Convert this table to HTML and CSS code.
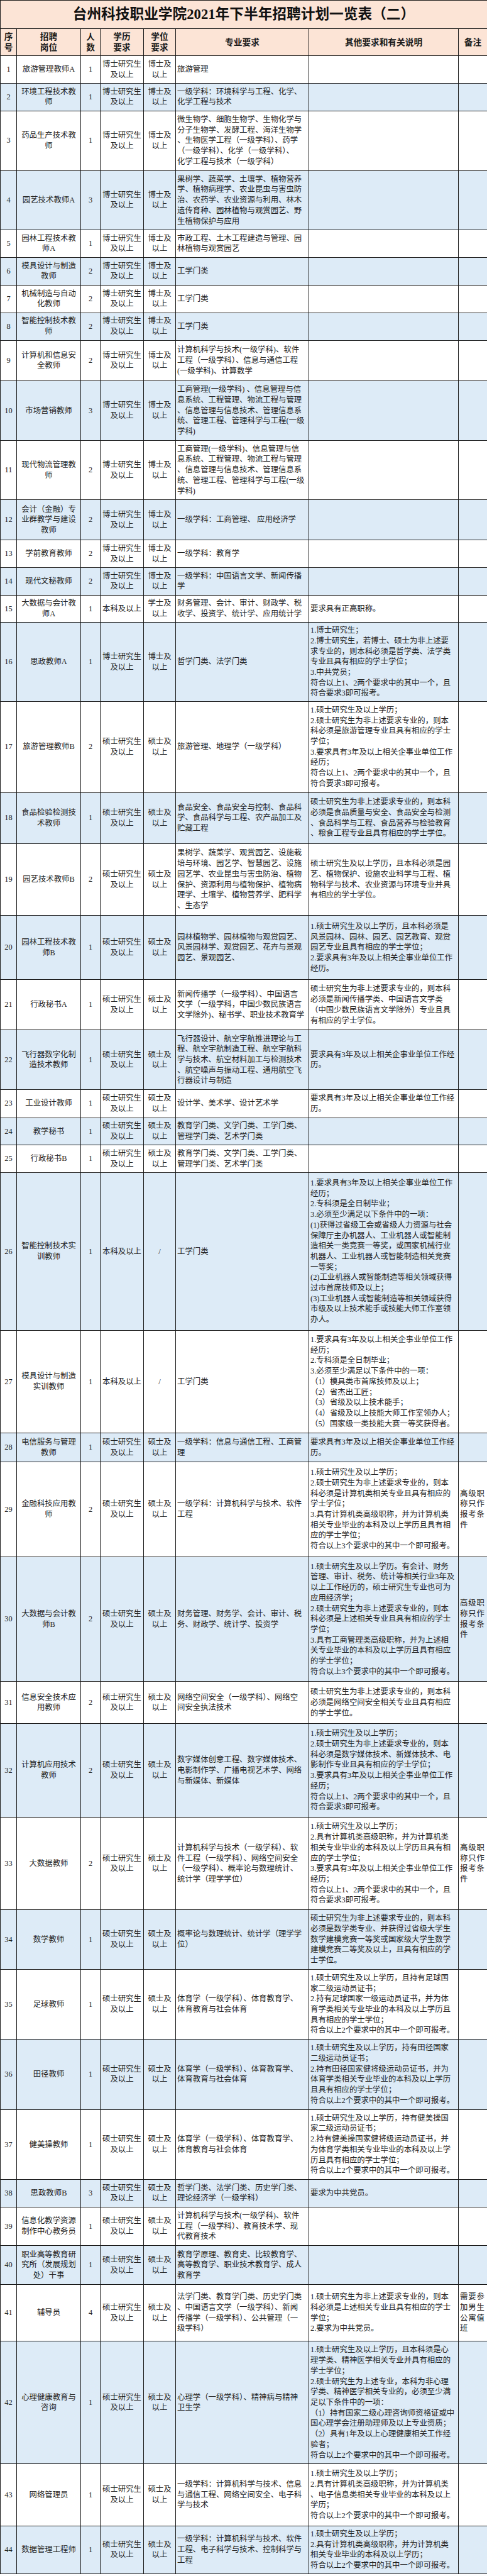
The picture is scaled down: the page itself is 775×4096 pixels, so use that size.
FILE: index.html
```html
<!DOCTYPE html>
<html lang="zh-CN">
<head>
<meta charset="utf-8">
<title>台州科技职业学院2021年下半年招聘计划一览表（二）</title>
<link rel="stylesheet" href="styles.css">
</head>
<body>
<table class="plan">
<colgroup>
<col class="w-seq"><col class="w-pos"><col class="w-num"><col class="w-edu"><col class="w-deg"><col class="w-major"><col class="w-other"><col class="w-note">
</colgroup>
<thead>
<tr class="title"><th colspan="8">台州科技职业学院2021年下半年招聘计划一览表（二）</th></tr>
<tr class="head">
<th>序<br>号</th><th>招聘<br>岗位</th><th>人<br>数</th><th>学历<br>要求</th><th>学位<br>要求</th><th>专业要求</th><th>其他要求和有关说明</th><th>备注</th>
</tr>
</thead>
<tbody>
<tr><td>1</td><td>旅游管理教师A</td><td>1</td><td>博士研究生<br>及以上</td><td>博士及<br>以上</td><td class="l">旅游管理</td><td class="l"></td><td class="l"></td></tr>
<tr><td>2</td><td>环境工程技术教<br>师</td><td>1</td><td>博士研究生<br>及以上</td><td>博士及<br>以上</td><td class="l">一级学科：环境科学与工程、化学、<br>化学工程与技术</td><td class="l"></td><td class="l"></td></tr>
<tr><td>3</td><td>药品生产技术教<br>师</td><td>1</td><td>博士研究生<br>及以上</td><td>博士及<br>以上</td><td class="l">微生物学、细胞生物学、生物化学与<br>分子生物学、发酵工程、海洋生物学<br>、生物医学工程（一级学科）、药学<br>（一级学科）、化学（一级学科）、<br>化学工程与技术（一级学科）</td><td class="l"></td><td class="l"></td></tr>
<tr><td>4</td><td>园艺技术教师A</td><td>3</td><td>博士研究生<br>及以上</td><td>博士及<br>以上</td><td class="l">果树学、蔬菜学、土壤学、植物营养<br>学、植物病理学、农业昆虫与害虫防<br>治、农药学、农业资源与利用、林木<br>遗传育种、园林植物与观赏园艺、野<br>生植物保护与应用</td><td class="l"></td><td class="l"></td></tr>
<tr><td>5</td><td>园林工程技术教<br>师A</td><td>1</td><td>博士研究生<br>及以上</td><td>博士及<br>以上</td><td class="l">市政工程、土木工程建造与管理、园<br>林植物与观赏园艺</td><td class="l"></td><td class="l"></td></tr>
<tr><td>6</td><td>模具设计与制造<br>教师</td><td>2</td><td>博士研究生<br>及以上</td><td>博士及<br>以上</td><td class="l">工学门类</td><td class="l"></td><td class="l"></td></tr>
<tr><td>7</td><td>机械制造与自动<br>化教师</td><td>2</td><td>博士研究生<br>及以上</td><td>博士及<br>以上</td><td class="l">工学门类</td><td class="l"></td><td class="l"></td></tr>
<tr><td>8</td><td>智能控制技术教<br>师</td><td>2</td><td>博士研究生<br>及以上</td><td>博士及<br>以上</td><td class="l">工学门类</td><td class="l"></td><td class="l"></td></tr>
<tr><td>9</td><td>计算机和信息安<br>全教师</td><td>2</td><td>博士研究生<br>及以上</td><td>博士及<br>以上</td><td class="l">计算机科学与技术(一级学科)、软件<br>工程（一级学科）、信息与通信工程<br>(一级学科)、计算数学</td><td class="l"></td><td class="l"></td></tr>
<tr><td>10</td><td>市场营销教师</td><td>3</td><td>博士研究生<br>及以上</td><td>博士及<br>以上</td><td class="l">工商管理(一级学科) 、信息管理与信<br>息系统、工程管理、物流工程与管理<br>、信息管理与信息技术、管理信息系<br>统、管理工程、管理科学与工程(一级<br>学科)</td><td class="l"></td><td class="l"></td></tr>
<tr><td>11</td><td>现代物流管理教<br>师</td><td>2</td><td>博士研究生<br>及以上</td><td>博士及<br>以上</td><td class="l">工商管理(一级学科)、信息管理与信<br>息系统、工程管理、物流工程与管理<br>、信息管理与信息技术、管理信息系<br>统、管理工程、管理科学与工程(一级<br>学科)</td><td class="l"></td><td class="l"></td></tr>
<tr><td>12</td><td>会计（金融）专<br>业群教学与建设<br>教师</td><td>2</td><td>博士研究生<br>及以上</td><td>博士及<br>以上</td><td class="l">一级学科：工商管理、 应用经济学</td><td class="l"></td><td class="l"></td></tr>
<tr><td>13</td><td>学前教育教师</td><td>2</td><td>博士研究生<br>及以上</td><td>博士及<br>以上</td><td class="l">一级学科：教育学</td><td class="l"></td><td class="l"></td></tr>
<tr><td>14</td><td>现代文秘教师</td><td>2</td><td>博士研究生<br>及以上</td><td>博士及<br>以上</td><td class="l">一级学科：中国语言文学、新闻传播<br>学</td><td class="l"></td><td class="l"></td></tr>
<tr><td>15</td><td>大数据与会计教<br>师A</td><td>1</td><td>本科及以上</td><td>学士及<br>以上</td><td class="l">财务管理、会计、审计、财政学、税<br>收学、投资学、统计学、应用统计学</td><td class="l">要求具有正高职称。</td><td class="l"></td></tr>
<tr><td>16</td><td>思政教师A</td><td>1</td><td>博士研究生<br>及以上</td><td>博士及<br>以上</td><td class="l">哲学门类、法学门类</td><td class="l">1.博士研究生；<br>2.博士研究生，若博士、硕士为非上述要<br>求专业的，则本科必须是哲学类、法学类<br>专业且具有相应的学士学位；<br>3.中共党员；<br>符合以上1、2两个要求中的其中一个，且<br>符合要求3即可报考。</td><td class="l"></td></tr>
<tr><td>17</td><td>旅游管理教师B</td><td>2</td><td>硕士研究生<br>及以上</td><td>硕士及<br>以上</td><td class="l">旅游管理、地理学（一级学科）</td><td class="l">1.硕士研究生及以上学历；<br>2.硕士研究生为非上述要求专业的，则本<br>科必须是旅游管理专业且具有相应的学士<br>学位；<br>3.要求具有3年及以上相关企事业单位工作<br>经历；<br>符合以上1、2两个要求中的其中一个，且<br>符合要求3即可报考。</td><td class="l"></td></tr>
<tr><td>18</td><td>食品检验检测技<br>术教师</td><td>1</td><td>硕士研究生<br>及以上</td><td>硕士及<br>以上</td><td class="l">食品安全、食品安全与控制、食品科<br>学、食品科学与工程、农产品加工及<br>贮藏工程</td><td class="l">硕士研究生为非上述要求专业的，则本科<br>必须是食品质量与安全、食品安全与检测<br>、食品科学与工程、食品营养与检验教育<br>、粮食工程专业且具有相应的学士学位。</td><td class="l"></td></tr>
<tr><td>19</td><td>园艺技术教师B</td><td>2</td><td>硕士研究生<br>及以上</td><td>硕士及<br>以上</td><td class="l">果树学、蔬菜学、观赏园艺、设施栽<br>培与环境、园艺学、智慧园艺、设施<br>园艺学、农业昆虫与害虫防治、植物<br>保护、资源利用与植物保护、植物病<br>理学、土壤学、植物营养学、肥料学<br>、生态学</td><td class="l">硕士研究生及以上学历，且本科必须是园<br>艺、植物保护、设施农业科学与工程、植<br>物科学与技术、农业资源与环境专业并具<br>有相应的学士学位。</td><td class="l"></td></tr>
<tr><td>20</td><td>园林工程技术教<br>师B</td><td>1</td><td>硕士研究生<br>及以上</td><td>硕士及<br>以上</td><td class="l">园林植物学、园林植物与观赏园艺、<br>风景园林学、观赏园艺、花卉与景观<br>园艺、景观园艺、</td><td class="l">1.硕士研究生及以上学历，且本科必须是<br>风景园林、园林、园艺、园艺教育、观赏<br>园艺专业且具有相应的学士学位；<br>2.要求具有3年及以上相关企事业单位工作<br>经历。</td><td class="l"></td></tr>
<tr><td>21</td><td>行政秘书A</td><td>1</td><td>硕士研究生<br>及以上</td><td>硕士及<br>以上</td><td class="l">新闻传播学（一级学科）、中国语言<br>文学（一级学科，中国少数民族语言<br>文学除外)、秘书学、职业技术教育学</td><td class="l">硕士研究生为非上述要求专业的，则本科<br>必须是新闻传播学类、中国语言文学类<br>（中国少数民族语言文学除外）专业且具<br>有相应的学士学位。</td><td class="l"></td></tr>
<tr><td>22</td><td>飞行器数字化制<br>造技术教师</td><td>1</td><td>硕士研究生<br>及以上</td><td>硕士及<br>以上</td><td class="l">飞行器设计、航空宇航推进理论与工<br>程、航空宇航制造工程、航空宇航科<br>学与技术、航空材料加工与检测技术<br>、航空噪声与振动工程、通用航空飞<br>行器设计与制造</td><td class="l">要求具有3年及以上相关企事业单位工作经<br>历。</td><td class="l"></td></tr>
<tr><td>23</td><td>工业设计教师</td><td>1</td><td>硕士研究生<br>及以上</td><td>硕士及<br>以上</td><td class="l">设计学、美术学、设计艺术学</td><td class="l">要求具有3年及以上相关企事业单位工作经<br>历。</td><td class="l"></td></tr>
<tr><td>24</td><td>教学秘书</td><td>1</td><td>硕士研究生<br>及以上</td><td>硕士及<br>以上</td><td class="l">教育学门类、文学门类、工学门类、<br>管理学门类、艺术学门类</td><td class="l"></td><td class="l"></td></tr>
<tr><td>25</td><td>行政秘书B</td><td>1</td><td>硕士研究生<br>及以上</td><td>硕士及<br>以上</td><td class="l">教育学门类、文学门类、工学门类、<br>管理学门类、艺术学门类</td><td class="l"></td><td class="l"></td></tr>
<tr><td>26</td><td>智能控制技术实<br>训教师</td><td>1</td><td>本科及以上</td><td>/</td><td class="l">工学门类</td><td class="l">1.要求具有3年及以上相关企事业单位工作<br>经历；<br>2.专科须是全日制毕业；<br>3.必须至少满足以下条件中的一项：<br>(1)获得过省级工会或省级人力资源与社会<br>保障厅主办机器人、工业机器人或智能制<br>造相关一类竞赛一等奖，或国家机械行业<br>机器人、工业机器人或智能制造相关竞赛<br>一等奖；<br>(2)工业机器人或智能制造等相关领域获得<br>过市首席技师及以上；<br>(3)工业机器人或智能制造等相关领域获得<br>市级及以上技术能手或技能大师工作室领<br>办人。</td><td class="l"></td></tr>
<tr><td>27</td><td>模具设计与制造<br>实训教师</td><td>1</td><td>本科及以上</td><td>/</td><td class="l">工学门类</td><td class="l">1.要求具有3年及以上相关企事业单位工作<br>经历；<br>2.专科须是全日制毕业；<br>3.必须至少满足以下条件中的一项：<br>（1）模具类市首席技师及以上；<br>（2）省杰出工匠；<br>（3）省级及以上技术能手；<br>（4）省级及以上技能大师工作室领办人；<br>（5）国家级一类技能大赛一等奖获得者。</td><td class="l"></td></tr>
<tr><td>28</td><td>电信服务与管理<br>教师</td><td>1</td><td>硕士研究生<br>及以上</td><td>硕士及<br>以上</td><td class="l">一级学科：信息与通信工程、工商管<br>理</td><td class="l">要求具有3年及以上相关企事业单位工作经<br>历。</td><td class="l"></td></tr>
<tr><td>29</td><td>金融科技应用教<br>师</td><td>2</td><td>硕士研究生<br>及以上</td><td>硕士及<br>以上</td><td class="l">一级学科：计算机科学与技术、软件<br>工程</td><td class="l">1.硕士研究生及以上学历；<br>2.硕士研究生为非上述要求专业的，则本<br>科必须是计算机类相关专业且具有相应的<br>学士学位；<br>3.具有计算机类高级职称，并为计算机类<br>相关专业毕业的本科及以上学历且具有相<br>应的学士学位；<br>符合以上3个要求中的其中一个即可报考。</td><td class="l note">高级职<br>称只作<br>报考条<br>件</td></tr>
<tr><td>30</td><td>大数据与会计教<br>师B</td><td>2</td><td>硕士研究生<br>及以上</td><td>硕士及<br>以上</td><td class="l">财务管理、财务学、会计、审计、税<br>务、财政学、统计学、投资学</td><td class="l">1.硕士研究生及以上学历。有会计、财务<br>管理、审计、税务、统计等相关行业3年及<br>以上工作经历的，硕士研究生专业也可为<br>应用经济学；<br>2.硕士研究生为非上述要求专业的，则本<br>科必须是上述相关专业且具有相应的学士<br>学位；<br>3.具有工商管理类高级职称，并为上述相<br>关专业毕业的本科及以上学历且具有相应<br>的学士学位；<br>符合以上3个要求中的其中一个即可报考。</td><td class="l note">高级职<br>称只作<br>报考条<br>件</td></tr>
<tr><td>31</td><td>信息安全技术应<br>用教师</td><td>2</td><td>硕士研究生<br>及以上</td><td>硕士及<br>以上</td><td class="l">网络空间安全（一级学科）、网络空<br>间安全执法技术</td><td class="l">硕士研究生为非上述要求专业的，则本科<br>必须是网络空间安全相关专业且具有相应<br>的学士学位。</td><td class="l"></td></tr>
<tr><td>32</td><td>计算机应用技术<br>教师</td><td>2</td><td>硕士研究生<br>及以上</td><td>硕士及<br>以上</td><td class="l">数字媒体创意工程、数字媒体技术、<br>电影制作学、广播电视艺术学、网络<br>与新媒体、新媒体</td><td class="l">1.硕士研究生及以上学历；<br>2.硕士研究生为非上述要求专业的，则本<br>科必须是数字媒体技术、新媒体技术、电<br>影制作专业且具有相应的学士学位；<br>3.要求具有3年及以上相关企事业单位工作<br>经历；<br>符合以上1、2两个要求中的其中一个，且<br>符合要求3即可报考。</td><td class="l"></td></tr>
<tr><td>33</td><td>大数据教师</td><td>2</td><td>硕士研究生<br>及以上</td><td>硕士及<br>以上</td><td class="l">计算机科学与技术（一级学科）、软<br>件工程（一级学科）、网络空间安全<br>（一级学科）、概率论与数理统计、<br>统计学（理学学位）</td><td class="l">1.硕士研究生及以上学历；<br>2.具有计算机类高级职称，并为计算机类<br>相关专业毕业的本科及以上学历且具有相<br>应的学士学位；<br>3.要求具有3年及以上相关企事业单位工作<br>经历；<br>符合以上1、2两个要求中的其中一个，且<br>符合要求3即可报考。</td><td class="l note">高级职<br>称只作<br>报考条<br>件</td></tr>
<tr><td>34</td><td>数学教师</td><td>1</td><td>硕士研究生<br>及以上</td><td>硕士及<br>以上</td><td class="l">概率论与数理统计、统计学（理学学<br>位）</td><td class="l">硕士研究生为非上述要求专业的，则本科<br>必须是数学类专业、并获得过省级大学生<br>数学建模竞赛一等奖或国家级大学生数学<br>建模竞赛二等奖及以上，且具有相应的学<br>士学位。</td><td class="l"></td></tr>
<tr><td>35</td><td>足球教师</td><td>1</td><td>硕士研究生<br>及以上</td><td>硕士及<br>以上</td><td class="l">体育学（一级学科）、体育教育学、<br>体育教育与社会体育</td><td class="l">1.硕士研究生及以上学历，且持有足球国<br>家二级运动员证书；<br>2.持有足球国家一级运动员证书，并为体<br>育学类相关专业毕业的本科及以上学历且<br>具有相应的学士学位；<br>符合以上2个要求中的其中一个即可报考。</td><td class="l"></td></tr>
<tr><td>36</td><td>田径教师</td><td>1</td><td>硕士研究生<br>及以上</td><td>硕士及<br>以上</td><td class="l">体育学（一级学科）、体育教育学、<br>体育教育与社会体育</td><td class="l">1.硕士研究生及以上学历，持有田径国家<br>二级运动员证书；<br>2.持有田径国家健将级运动员证书，并为<br>体育学类相关专业毕业的本科及以上学历<br>且具有相应的学士学位；<br>符合以上2个要求中的其中一个即可报考。</td><td class="l"></td></tr>
<tr><td>37</td><td>健美操教师</td><td>1</td><td>硕士研究生<br>及以上</td><td>硕士及<br>以上</td><td class="l">体育学（一级学科）、体育教育学、<br>体育教育与社会体育</td><td class="l">1.硕士研究生及以上学历，持有健美操国<br>家二级运动员证书；<br>2.持有健美操国家健将级运动员证书，并<br>为体育学类相关专业毕业的本科及以上学<br>历且具有相应的学士学位；<br>符合以上2个要求中的其中一个即可报考。</td><td class="l"></td></tr>
<tr><td>38</td><td>思政教师B</td><td>3</td><td>硕士研究生<br>及以上</td><td>硕士及<br>以上</td><td class="l">哲学门类、法学门类、历史学门类、<br>理论经济学（一级学科）</td><td class="l">要求为中共党员。</td><td class="l"></td></tr>
<tr><td>39</td><td>信息化教学资源<br>制作中心教务员</td><td>1</td><td>硕士研究生<br>及以上</td><td>硕士及<br>以上</td><td class="l">计算机科学与技术(一级学科)、软件<br>工程（一级学科）、教育技术学、现<br>代教育技术</td><td class="l"></td><td class="l"></td></tr>
<tr><td>40</td><td>职业高等教育研<br>究所（发展规划<br>处）干事</td><td>1</td><td>硕士研究生<br>及以上</td><td>硕士及<br>以上</td><td class="l">教育学原理、教育史、比较教育学、<br>高等教育学、职业技术教育学、成人<br>教育学</td><td class="l"></td><td class="l"></td></tr>
<tr><td>41</td><td>辅导员</td><td>4</td><td>硕士研究生<br>及以上</td><td>硕士及<br>以上</td><td class="l">法学门类、教育学门类、历史学门类<br>、中国语言文学（一级学科）、新闻<br>传播学（一级学科）、公共管理（一<br>级学科）</td><td class="l">1.硕士研究生为非上述要求专业的，则本<br>科必须是上述相关专业且具有相应的学士<br>学位；<br>2.要求为中共党员。</td><td class="l note">需要参<br>加男生<br>公寓值<br>班</td></tr>
<tr><td>42</td><td>心理健康教育与<br>咨询</td><td>1</td><td>硕士研究生<br>及以上</td><td>硕士及<br>以上</td><td class="l">心理学（一级学科）、精神病与精神<br>卫生学</td><td class="l">1.硕士研究生及以上学历，且本科须是心<br>理学类、精神医学相关专业并具有相应的<br>学士学位；<br>2.硕士研究生为上述专业，本科为非心理<br>学类、精神医学相关专业的，必须至少满<br>足以下条件中的一项：<br>（1）持有国家二级心理咨询师资格证或中<br>国心理学会注册助理师及以上专业资质；<br>（2）具有1年及以上心理健康相关工作经<br>验者；<br>符合以上2个要求中的其中一个即可报考。</td><td class="l"></td></tr>
<tr><td>43</td><td>网络管理员</td><td>1</td><td>硕士研究生<br>及以上</td><td>硕士及<br>以上</td><td class="l">一级学科：计算机科学与技术、信息<br>与通信工程、网络空间安全、电子科<br>学与技术</td><td class="l">1.硕士研究生及以上学历；<br>2.具有计算机类高级职称，并为计算机类<br>、电子信息类相关专业毕业的本科及以上<br>学历；<br>符合以上2个要求中的其中一个即可报考。</td><td class="l"></td></tr>
<tr><td>44</td><td>数据管理工程师</td><td>1</td><td>硕士研究生<br>及以上</td><td>硕士及<br>以上</td><td class="l">一级学科：计算机科学与技术、软件<br>工程、电子科学与技术、控制科学与<br>工程</td><td class="l">1.硕士研究生及以上学历；<br>2.具有计算机类高级职称，并为计算机类<br>相关专业毕业的本科及以上学历；<br>符合以上2个要求中的其中一个即可报考。</td><td class="l"></td></tr>
</tbody>
</table>
</body>
</html>
```

FILE: styles.css
```css
html, body {
  margin: 0;
  padding: 0;
  background: #ffffff;
}

body {
  font-family: "Liberation Serif", "Noto Sans CJK SC", serif;
  color: #222222;
}

.plan {
  border-collapse: collapse;
  table-layout: fixed;
  width: 775px;
}

.w-seq { width: 26px; }
.w-pos { width: 102px; }
.w-num { width: 31px; }
.w-edu { width: 69px; }
.w-deg { width: 51px; }
.w-major { width: 212px; }
.w-other { width: 238px; }
.w-note { width: 46px; }

.plan th,
.plan td {
  border: 1px solid #1a1a1a;
  padding: 0;
  vertical-align: middle;
  text-align: center;
  white-space: nowrap;
  overflow: hidden;
}

.plan td {
  font-size: 12.4px;
  line-height: 16.7px;
  font-weight: normal;
}

.plan td.l {
  text-align: left;
  padding-left: 2px;
}

.plan td.note {
  letter-spacing: 0.9px;
  padding-left: 2px;
}

.title th {
  height: 44.2px;
  background: #fce4d6;
  font-size: 22.7px;
  line-height: 28px;
  font-weight: bold;
  color: #111111;
  letter-spacing: 0;
}

.head th {
  height: 42px;
  background: #fce4d6;
  font-size: 13.7px;
  line-height: 17.2px;
  font-weight: bold;
  color: #1a1a1a;
}

.plan tbody tr:nth-child(even) {
  background: #ddebf7;
}

.plan tbody tr:nth-child(1) { height: 43.74px; }
.plan tbody tr:nth-child(2) { height: 43.74px; }
.plan tbody tr:nth-child(3) { height: 95.36px; }
.plan tbody tr:nth-child(4) { height: 93.92px; }
.plan tbody tr:nth-child(5) { height: 43.74px; }
.plan tbody tr:nth-child(6) { height: 44.45px; }
.plan tbody tr:nth-child(7) { height: 43.74px; }
.plan tbody tr:nth-child(8) { height: 43.74px; }
.plan tbody tr:nth-child(9) { height: 64.53px; }
.plan tbody tr:nth-child(10) { height: 94.64px; }
.plan tbody tr:nth-child(11) { height: 94.65px; }
.plan tbody tr:nth-child(12) { height: 63.81px; }
.plan tbody tr:nth-child(13) { height: 43.74px; }
.plan tbody tr:nth-child(14) { height: 43.73px; }
.plan tbody tr:nth-child(15) { height: 43.74px; }
.plan tbody tr:nth-child(16) { height: 125.48px; }
.plan tbody tr:nth-child(17) { height: 144.83px; }
.plan tbody tr:nth-child(18) { height: 81.02px; }
.plan tbody tr:nth-child(19) { height: 114.72px; }
.plan tbody tr:nth-child(20) { height: 101.81px; }
.plan tbody tr:nth-child(21) { height: 80.31px; }
.plan tbody tr:nth-child(22) { height: 94.64px; }
.plan tbody tr:nth-child(23) { height: 44.46px; }
.plan tbody tr:nth-child(24) { height: 43.73px; }
.plan tbody tr:nth-child(25) { height: 43.74px; }
.plan tbody tr:nth-child(26) { height: 250.95px; }
.plan tbody tr:nth-child(27) { height: 163.48px; }
.plan tbody tr:nth-child(28) { height: 45.88px; }
.plan tbody tr:nth-child(29) { height: 150.57px; }
.plan tbody tr:nth-child(30) { height: 198.61px; }
.plan tbody tr:nth-child(31) { height: 66.68px; }
.plan tbody tr:nth-child(32) { height: 149.14px; }
.plan tbody tr:nth-child(33) { height: 146.99px; }
.plan tbody tr:nth-child(34) { height: 94.64px; }
.plan tbody tr:nth-child(35) { height: 111.13px; }
.plan tbody tr:nth-child(36) { height: 111.86px; }
.plan tbody tr:nth-child(37) { height: 111.13px; }
.plan tbody tr:nth-child(38) { height: 43.74px; }
.plan tbody tr:nth-child(39) { height: 61.66px; }
.plan tbody tr:nth-child(40) { height: 61.66px; }
.plan tbody tr:nth-child(41) { height: 90.34px; }
.plan tbody tr:nth-child(42) { height: 195.03px; }
.plan tbody tr:nth-child(43) { height: 98.23px; }
.plan tbody tr:nth-child(44) { height: 76.72px; }
```
